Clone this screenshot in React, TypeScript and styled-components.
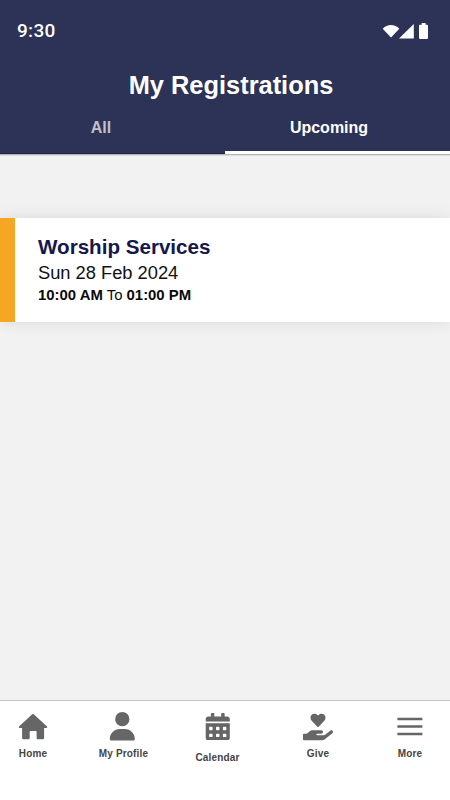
import React from "react";
import styled, { createGlobalStyle } from "styled-components";
import { FaCalendarAlt, FaHandHoldingHeart } from "react-icons/fa";
import { FaUser } from "react-icons/fa6";

const GlobalStyle = createGlobalStyle`
  * { box-sizing: border-box; }
  body { margin: 0; background: #f2f2f2; font-family: "Liberation Sans", Arial, sans-serif; }
`;

const Screen = styled.div`
  display: flex;
  flex-direction: column;
  width: 450px;
  height: 800px;
  overflow: hidden;
  background: #f2f2f2;
`;

const Header = styled.header`
  display: flex;
  flex-direction: column;
  height: 155px;
  background: #2d3356;
  border-bottom: 1px solid #b4b4b8;
  box-shadow: 0 1px 0 #dedede;
  color: #fff;
`;

const StatusBar = styled.div`
  display: flex;
  justify-content: space-between;
  height: 62px;
  padding: 20px 21px 0 17px;
`;

const Clock = styled.span`
  font: 500 19px/22px Roboto, sans-serif;
  letter-spacing: 0.3px;
`;

const StatusIcons = styled.svg`
  width: 47px;
  height: 18px;
  margin-top: 2px;
`;

const Title = styled.h1`
  margin: 0;
  height: 48px;
  padding-left: 12px;
  font-size: 25.4px;
  line-height: 47px;
  text-align: center;
`;

const Tabs = styled.nav`
  display: grid;
  grid-template-columns: 1fr 1fr;
  flex: 1;
`;

const Tab = styled.a<{ $active?: boolean }>`
  padding: 7px ${(p) => (p.$active ? 17 : 23)}px 0 0;
  border-bottom: ${(p) => (p.$active ? "3px solid #fff" : "1px solid #1f254b")};
  color: ${(p) => (p.$active ? "#fff" : "#c0c0c8")};
  font-size: 16px;
  font-weight: 700;
  line-height: 22px;
  text-align: center;
`;

const Content = styled.main`
  flex: 1;
  padding-top: 63px;
`;

const EventCard = styled.article`
  height: 104px;
  padding: 15px 22px 0 23px;
  border-left: 15px solid #f5a623;
  background: #fff;
  box-shadow: 0 0 16px rgba(0, 0, 0, 0.1);
`;

const EventTitle = styled.h2`
  margin: 0;
  color: #14184a;
  font-size: 20.6px;
  line-height: 28px;
`;

const EventDate = styled.div`
  color: #111;
  font-size: 18.3px;
  line-height: 24px;
`;

const EventTime = styled.div`
  color: #0a0a0a;
  font-size: 14.9px;
  line-height: 21px;
`;

const BottomNav = styled.nav`
  display: grid;
  grid-template-columns: 66px 115px 73px 128px 56px;
  height: 100px;
  border-top: 1px solid #c4c4c4;
  background: #fff;
`;

const NavItem = styled.a<{ $gap?: number }>`
  display: flex;
  flex-direction: column;
  align-items: center;
  gap: ${(p) => p.$gap ?? 5}px;
  padding-top: 11px;
  color: #666;
`;

const IconBox = styled.span<{ $shift?: number }>`
  display: flex;
  align-items: center;
  justify-content: center;
  height: 29px;
  margin-right: ${(p) => p.$shift ?? 0}px;
`;

const NavLabel = styled.span`
  color: #444;
  font-size: 10px;
  font-weight: 700;
  letter-spacing: 0.15px;
  line-height: 16px;
  white-space: nowrap;
`;

const HomeIcon = () => (
  <svg width="30" height="29" viewBox="0 0 30 29" fill="currentColor">
    <path d="M14.2 2.2Q15 1.6 15.8 2.2L29 14.4Q29.8 15.8 28.3 16H26.1V26Q26.1 27.2 24.9 27.2H19.6Q18.6 27.2 18.6 26V20Q18.6 19 17.6 19H12.7Q11.7 19 11.7 20V26Q11.7 27.2 10.5 27.2H5.3Q4.1 27.2 4.1 26V16H1.7Q.2 15.8 1 14.4Z" />
  </svg>
);

const MenuIcon = () => (
  <svg width="26" height="29" viewBox="0 0 26 29" stroke="currentColor" strokeWidth="2.3">
    <path d="M.4 7H25.4M.4 14.5H25.4M.4 22H25.4" />
  </svg>
);

export default function App() {
  return (
    <>
      <GlobalStyle />
      <Screen>
        <Header>
          <StatusBar>
            <Clock>9:30</Clock>
            <StatusIcons viewBox="0 0 47 18" fill="#fff">
              <path d="M.7 6.8C5.3 1.8 12.7 1.8 17.3 6.8L9 15.4Z" />
              <path d="M31.8 2V16.5H17Z" />
              <path d="M39.7 1h3.9v1.7h1.3q1.1 0 1.1 1.1v12.1q0 1.1-1.1 1.1h-6.8q-1.1 0-1.1-1.1V3.8q0-1.1 1.1-1.1h1.6z" />
            </StatusIcons>
          </StatusBar>
          <Title>My Registrations</Title>
          <Tabs>
            <Tab>All</Tab>
            <Tab $active>Upcoming</Tab>
          </Tabs>
        </Header>
        <Content>
          <EventCard>
            <EventTitle>Worship Services</EventTitle>
            <EventDate>Sun 28 Feb 2024</EventDate>
            <EventTime>
              <b>10:00 AM</b> To <b>01:00 PM</b>
            </EventTime>
          </EventCard>
        </Content>
        <BottomNav>
          <NavItem>
            <IconBox><HomeIcon /></IconBox>
            <NavLabel>Home</NavLabel>
          </NavItem>
          <NavItem>
            <IconBox $shift={2}><FaUser size={28.6} /></IconBox>
            <NavLabel>My Profile</NavLabel>
          </NavItem>
          <NavItem $gap={9}>
            <IconBox><FaCalendarAlt size={27.5} /></IconBox>
            <NavLabel>Calendar</NavLabel>
          </NavItem>
          <NavItem>
            <IconBox><FaHandHoldingHeart size={30} /></IconBox>
            <NavLabel>Give</NavLabel>
          </NavItem>
          <NavItem>
            <IconBox><MenuIcon /></IconBox>
            <NavLabel>More</NavLabel>
          </NavItem>
        </BottomNav>
      </Screen>
    </>
  );
}
